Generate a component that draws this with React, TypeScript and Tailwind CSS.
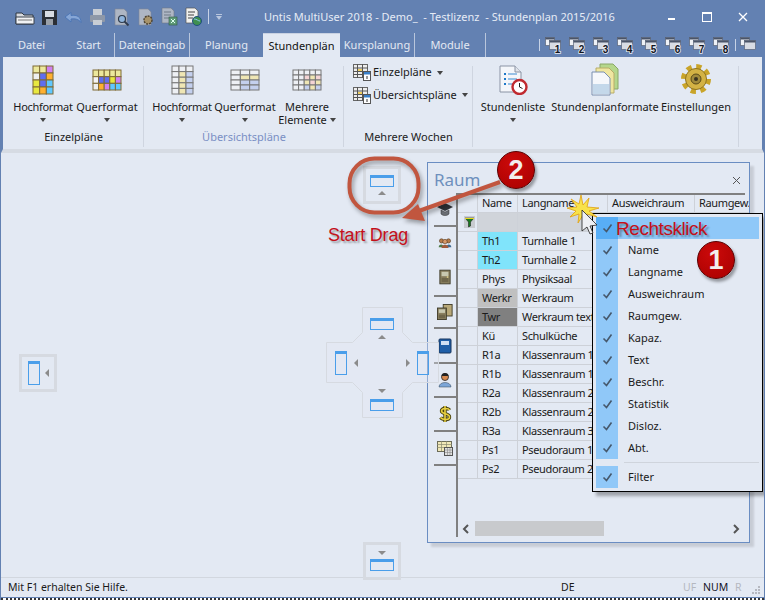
import type { ReactNode } from "react";

const TABS = [
  { label: "Datei", w: "w-[57px]" },
  { label: "Start", w: "w-[54px] pl-[3px]" },
  { label: "Dateneingab", w: "w-[76px] border-x border-[#b9c6dc]" },
  { label: "Planung", w: "w-[73px]" },
  { label: "Stundenplän", w: "w-[77px]", active: true },
  { label: "Kursplanung", w: "w-[75px] border-r border-[#b9c6dc]" },
  { label: "Module", w: "w-[71px] border-r border-[#b9c6dc]" },
];

const ROWS = [
  ["Th1", "Turnhalle 1", "bg-[#80e4fb]"],
  ["Th2", "Turnhalle 2", "bg-[#80e4fb]"],
  ["Phys", "Physiksaal", ""],
  ["Werkr", "Werkraum", "bg-[#c0c0c0]"],
  ["Twr", "Werkraum text", "bg-[#808080]"],
  ["Kü", "Schulküche", ""],
  ["R1a", "Klassenraum 1a", ""],
  ["R1b", "Klassenraum 1b", ""],
  ["R2a", "Klassenraum 2a", ""],
  ["R2b", "Klassenraum 2b", ""],
  ["R3a", "Klassenraum 3a", ""],
  ["Ps1", "Pseudoraum 1", ""],
  ["Ps2", "Pseudoraum 2", ""],
];

const MENU = ["Name", "Langname", "Ausweichraum", "Raumgew.", "Kapaz.", "Text", "Beschr.", "Statistik", "Disloz.", "Abt."];

function Caret({ className = "" }: { className?: string }) {
  return <span className={`inline-block h-0 w-0 border-x-[3.5px] border-t-[4px] border-x-transparent border-t-[#444] ${className}`} />;
}

// small coloured timetable icon used on the big ribbon buttons
function GridIcon({ cols, rows, w, h, colors, line, bg = "#f4f4f4" }: { cols: number; rows: number; w: number; h: number; colors: Record<string, string>; line: string; bg?: string }) {
  const cw = w / cols;
  const ch = h / rows;
  const cells = [];
  for (let r = 0; r < rows; r++) {
    for (let c = 0; c < cols; c++) {
      cells.push(<rect key={`${r}-${c}`} x={c * cw + 1} y={r * ch + 1} width={cw} height={ch} fill={colors[`${r}${c}`] ?? bg} stroke={line} strokeWidth="1" />);
    }
  }
  return (
    <svg width={w + 2} height={h + 2} viewBox={`0 0 ${w + 2} ${h + 2}`}>
      {cells}
    </svg>
  );
}

function BigButton({ w, icon, lines, caret, caretInline, tight }: { w: string; icon: ReactNode; lines: string[]; caret?: boolean; caretInline?: boolean; tight?: boolean }) {
  return (
    <div className={`flex shrink-0 flex-col items-center ${w}`}>
      <div className="flex h-[33px] items-center justify-center">{icon}</div>
      <div className={`mt-[4px] flex flex-col items-center leading-[13px] ${tight ? "tracking-[-0.3px]" : ""}`}>
        {lines.map((l, i) => (
          <span key={l} className="flex items-center gap-[3px] whitespace-nowrap">
            {l}
            {caretInline && i === lines.length - 1 && <Caret />}
          </span>
        ))}
        {caret && <Caret className="mt-[5px]" />}
      </div>
    </div>
  );
}

function RibbonGroup({ w, label, labelClass, pad, children }: { w: string; label: string; labelClass?: string; pad: string; children: ReactNode }) {
  return (
    <div className={`relative flex shrink-0 flex-col ${w}`}>
      <div className={`flex flex-1 ${pad}`}>{children}</div>
      <div className={`h-[20px] text-center leading-[16px] ${labelClass ?? "text-[#222]"}`}>{label}</div>
      <div className="absolute right-0 top-[3px] bottom-[2px] w-px bg-[#cfd5e0]" />
    </div>
  );
}

function SmallTable() {
  return (
    <svg width="18" height="17" viewBox="0 0 18 17">
      <rect x="0.5" y="0.5" width="14" height="13" fill="#eee" stroke="#666" />
      <path d="M0 4h15M0 7.500h15M0 10.500h15M4.500 0v14M9.500 0v14" stroke="#555" />
      <rect x="5" y="5" width="4" height="2" fill="#f0d060" />
      <rect x="10" y="8" width="4" height="2" fill="#e08080" />
      <rect x="10.500" y="7.500" width="7" height="9" fill="#fff" stroke="#555" />
      <rect x="11" y="8" width="6" height="2.500" fill="#3a80c8" />
      <path d="M14 12v3" stroke="#333" />
    </svg>
  );
}

function WinIcon({ n }: { n?: number }) {
  return (
    <svg width="20" height="18" viewBox="0 0 20 18">
      <rect x="0.500" y="1.500" width="9" height="8" fill="#eef1f6" stroke="#5a6478" strokeWidth="0.7" />
      <rect x="0.500" y="1.500" width="9" height="2" fill="#4a5468" />
      <rect x="4.500" y="4.500" width="11" height="9" fill="#d8dce4" stroke="#5a6478" strokeWidth="0.7" />
      <rect x="4.500" y="4.500" width="11" height="2" fill="#4a5468" />
      {n ? (
        <text x="12.500" y="16.500" fontSize="10" fontWeight="700" fill="#10141c" stroke="#e8ecf4" strokeWidth="1.600" paintOrder="stroke" fontFamily="Liberation Sans, sans-serif" textAnchor="middle">
          {n}
        </text>
      ) : null}
    </svg>
  );
}

function QuickIcons() {
  return (
    <div className="flex items-center">
      <svg width="24" height="20" viewBox="0 0 24 20" className="ml-[10px]">
        <path d="M3 6h6l2 2h9v9H3z" fill="#d6d9de" stroke="#2f3640" />
        <path d="M3 10h18v7H3z" fill="#f1f2f4" stroke="#39414d" />
        <path d="M5 13h14" stroke="#777" />
      </svg>
      <svg width="24" height="20" viewBox="0 0 24 20">
        <rect x="5" y="3" width="15" height="15" fill="#2b2f36" />
        <rect x="8" y="4" width="9" height="6" fill="#d8dce2" />
        <rect x="9" y="12" width="7" height="6" fill="#9aa0a8" />
      </svg>
      <svg width="24" height="20" viewBox="0 0 24 20">
        <path d="M4 10l6-4.500v3c6-1 10 1.500 10 7-2.500-3.500-6-4-10-3.500v3z" fill="#86a6d6" stroke="#4a74b4" strokeWidth="0.9" />
      </svg>
      <svg width="24" height="20" viewBox="0 0 24 20">
        <rect x="8" y="2" width="9" height="6" fill="#c8cdd4" />
        <rect x="5" y="8" width="15" height="7" rx="1" fill="#8e98a8" />
        <rect x="8" y="13" width="9" height="5" fill="#c8cdd4" />
      </svg>
      <svg width="24" height="20" viewBox="0 0 24 20">
        <path d="M6 2h9l3 3v13H6z" fill="#aeb6c4" stroke="#7f8896" strokeWidth="0.6" />
        <circle cx="13" cy="12" r="3.500" fill="#8fb4dc" stroke="#2e3a4c" strokeWidth="1.200" />
        <path d="M15.500 14.500l4 4" stroke="#2e3a4c" strokeWidth="1.800" />
      </svg>
      <svg width="24" height="20" viewBox="0 0 24 20">
        <path d="M6 2h9l3 3v13H6z" fill="#aeb6c4" stroke="#7f8896" strokeWidth="0.6" />
        <circle cx="15" cy="13" r="4" fill="#a8936a" stroke="#4a4030" strokeWidth="1.400" strokeDasharray="2 1" />
      </svg>
      <svg width="24" height="20" viewBox="0 0 24 20">
        <path d="M5 1h9l3 3v12H5z" fill="#aeb6c4" stroke="#6f7886" strokeWidth="0.6" />
        <path d="M7 5h7M7 8h7M7 11h7" stroke="#6f7886" />
        <rect x="12" y="10" width="8" height="8" fill="#5f9a78" stroke="#2f5a42" strokeWidth="0.6" />
        <path d="M14 12l4 4M18 12l-4 4" stroke="#dfe" />
      </svg>
      <svg width="24" height="20" viewBox="0 0 24 20">
        <path d="M5 1h9l3 3v12H5z" fill="#f0f0ee" stroke="#555" strokeWidth="0.7" />
        <path d="M7 5h7M7 8h6M7 11h5" stroke="#444" />
        <circle cx="16" cy="14" r="4.500" fill="#3f8f50" stroke="#1f4f80" />
        <path d="M13 12c3 0 4 2 6 2" stroke="#8fd0f0" />
      </svg>
      <div className="ml-[3px] h-[15px] w-px bg-[#c6d2e6]" />
      <div className="ml-[7px] mt-px flex flex-col items-center gap-[1px]">
        <div className="h-px w-[6px] bg-[#b8c6de]" />
        <Caret className="border-t-[#b8c6de]" />
      </div>
    </div>
  );
}

function PanelGlyph({ vertical }: { vertical?: boolean }) {
  return <div className={`border border-[#4a9eea] border-t-[3px] bg-transparent ${vertical ? "h-[24px] w-[12px]" : "h-[12px] w-[24px]"}`} />;
}

function GuideArrow({ dir }: { dir: "up" | "down" | "left" }) {
  if (dir === "up") return <span className="h-0 w-0 border-x-[4px] border-b-[4px] border-x-transparent border-b-[#8b8b8b]" />;
  if (dir === "down") return <span className="h-0 w-0 border-x-[4px] border-t-[4px] border-x-transparent border-t-[#8b8b8b]" />;
  return <span className="h-0 w-0 border-y-[4px] border-r-[4px] border-y-transparent border-r-[#8b8b8b]" />;
}

function SideIcon({ kind }: { kind: string }) {
  if (kind === "cap")
    return (
      <svg width="18" height="16" viewBox="0 0 18 16">
        <path d="M1 6l8-4 8 4-8 4z" fill="#30343a" />
        <path d="M5 9v4c2 2 6 2 8 0V9l-4 2z" fill="#6a6e74" stroke="#333" strokeWidth="0.5" />
      </svg>
    );
  if (kind === "people")
    return (
      <svg width="14" height="12" viewBox="0 0 20 16">
        <circle cx="5" cy="5" r="3" fill="#b87c48" stroke="#4a3018" strokeWidth="0.8" />
        <circle cx="15" cy="5" r="3" fill="#b87c48" stroke="#4a3018" strokeWidth="0.8" />
        <circle cx="10" cy="6" r="3.200" fill="#d89868" stroke="#4a3018" strokeWidth="0.8" />
        <path d="M1 14c0-5 7-5 7 0z" fill="#4f7a48" />
        <path d="M12 14c0-5 7-5 7 0z" fill="#3e6a90" />
        <path d="M5 15c0-6 10-6 10 0z" fill="#a05a3a" />
      </svg>
    );
  if (kind === "door")
    return (
      <svg width="12" height="16" viewBox="0 0 14 18">
        <rect x="1" y="1" width="12" height="16" fill="#8a8060" stroke="#3c3826" />
        <rect x="3" y="3" width="8" height="5" fill="#c8c8b0" />
        <rect x="3" y="10" width="8" height="5" fill="#6f664a" />
        <circle cx="10" cy="9" r="1" fill="#e8d890" />
      </svg>
    );
  if (kind === "doors")
    return (
      <svg width="16" height="16" viewBox="0 0 18 18">
        <rect x="7" y="0.500" width="10" height="13" fill="#b8a878" stroke="#3c3826" />
        <rect x="0.500" y="4.500" width="10" height="13" fill="#8a8060" stroke="#3c3826" />
        <rect x="2" y="6" width="7" height="4" fill="#c8c8b0" />
        <rect x="2" y="12" width="7" height="4" fill="#6f664a" />
      </svg>
    );
  if (kind === "book")
    return (
      <svg width="14" height="16" viewBox="0 0 14 16">
        <rect x="1" y="1" width="12" height="14" rx="1" fill="#1f5fa8" stroke="#17345c" />
        <rect x="3" y="3" width="8" height="4" fill="#cfe0f4" />
      </svg>
    );
  if (kind === "person")
    return (
      <svg width="14" height="16" viewBox="0 0 14 16">
        <circle cx="7" cy="5" r="3.500" fill="#d88a50" stroke="#222" strokeWidth="0.8" />
        <path d="M3.500 4c0-4 7-4 7 0z" fill="#222" />
        <path d="M1 15c0-6 12-6 12 0z" fill="#7ca6d8" stroke="#345" strokeWidth="0.5" />
      </svg>
    );
  if (kind === "dollar")
    return (
      <svg width="14" height="18" viewBox="0 0 14 18">
        <path d="M11.500 5c-1-2-8-2.500-8 1 0 3.500 8 2 8 6 0 3.500-7 3-9 .5M7 1v16" fill="none" stroke="#4a4410" strokeWidth="3.400" />
        <path d="M11.500 5c-1-2-8-2.500-8 1 0 3.500 8 2 8 6 0 3.500-7 3-9 .5M7 1v16" fill="none" stroke="#e8d040" strokeWidth="1.600" />
      </svg>
    );
  return (
    <svg width="16" height="16" viewBox="0 0 16 16">
      <rect x="0.500" y="1.500" width="14" height="10" fill="#f0e8b8" stroke="#6c6c58" />
      <path d="M0 4.500h15M0 7.500h15M4.500 1v10M9.500 1v10" stroke="#8a8a70" strokeWidth="0.7" />
      <rect x="7.500" y="7.500" width="8" height="8" fill="#e0e0e0" stroke="#555" />
      <path d="M8 10h7M8 12.500h7M10.500 8v7M13 8v7" stroke="#888" strokeWidth="0.6" />
    </svg>
  );
}

const SIDE_TABS = [
  { h: "h-[34px]", icons: ["cap"] },
  { h: "h-[70px]", icons: ["people", "door"] },
  { h: "h-[32px]", icons: ["doors"] },
  { h: "h-[35px]", icons: ["book"] },
  { h: "h-[34px]", icons: ["person"] },
  { h: "h-[34px]", icons: ["dollar"] },
  { h: "h-[34px]", icons: ["cal"] },
];

function Cell({ w, className = "", children }: { w: string; className?: string; children?: ReactNode }) {
  return <div className={`flex shrink-0 items-center overflow-hidden whitespace-nowrap border-r border-b border-[#cdd1d8] pl-[4px] tracking-[-0.35px] ${w} ${className}`}>{children}</div>;
}

function Check() {
  return (
    <svg width="11" height="10" viewBox="0 0 11 10">
      <path d="M1.500 5.500l3 3 5-7" fill="none" stroke="#46586c" strokeWidth="1.600" />
    </svg>
  );
}

export default function App() {
  const gold = { "00": "#ece89c", "01": "#ece89c", "02": "#ece89c" };
  return (
    <div className="relative flex h-[600px] w-[765px] flex-col overflow-hidden border-x border-[#6381b2] bg-[#e3e9f3] text-[11px] text-[#1a1a1a] [font-family:'Noto_Sans',sans-serif]">
      {/* title bar */}
      <div className="flex h-[33px] shrink-0 items-center bg-[#6381b2] pl-[2px] text-[#e6ecf6]">
        <div className="w-[261px]">
          <QuickIcons />
        </div>
        <div className="whitespace-nowrap pt-[1px]">Untis MultiUser 2018 - Demo_ &nbsp;- Testlizenz &nbsp;- Stundenplan 2015/2016</div>
        <div className="ml-auto flex items-center">
          <div className="flex w-[36px] justify-center">
            <div className="mt-[5px] h-[2px] w-[7px] bg-white" />
          </div>
          <div className="flex w-[36px] justify-center">
            <div className="h-[10px] w-[10px] border border-white border-t-2" />
          </div>
          <div className="flex w-[36px] justify-center text-white">
            <svg width="10" height="10" viewBox="0 0 10 10">
              <path d="M1 1l8 8M9 1l-8 8" stroke="#fff" strokeWidth="1.300" />
            </svg>
          </div>
          <div className="w-[3px]" />
        </div>
      </div>

      {/* tabs */}
      <div className="flex h-[24px] shrink-0 bg-[#6381b2] pl-[2px] text-[#e3e9f3]">
        {TABS.map((t) => (
          <div key={t.label} className={`flex items-center justify-center whitespace-nowrap pt-[1px] ${t.w} ${t.active ? "border-t border-[#c9d2e2] bg-[#e3e9f3] text-[#111]" : ""}`}>
            {t.label}
          </div>
        ))}
        <div className="ml-[53px] flex items-center">
          <div className="mr-[3px] h-[12px] w-px bg-[#c6d2e6]" />
          <div className="flex w-[192px]">
            {[1, 2, 3, 4, 5, 6, 7, 8].map((n) => (
              <div key={n} className="flex w-[24px] justify-center">
                <WinIcon n={n} />
              </div>
            ))}
          </div>
          <div className="h-[12px] w-px bg-[#c6d2e6]" />
          <div className="ml-[4px]">
            <WinIcon />
          </div>
        </div>
      </div>

      {/* ribbon */}
      <div className="flex h-[96px] shrink-0 border-x-2 border-b-[4px] border-x-[#6381b2] border-b-[#d6dbe3] pt-[6px]">
        <RibbonGroup w="w-[141px]" label="Einzelpläne" pad="pl-[8px]">
          <BigButton
            w="w-[64px]"
            caret
            tight
            lines={["Hochformat"]}
            icon={
              <GridIcon cols={3} rows={4} w={20} h={28} line="#7f6b35" colors={{ "00": "#ece89c", "01": "#ece89c", "02": "#d080f0", "10": "#efefef", "11": "#5f6ef0", "12": "#ffb030", "20": "#e8e840", "21": "#5f6ef0", "22": "#60c8ff", "30": "#e8e840", "31": "#ffb030", "32": "#60c8ff" }} />
            }
          />
          <BigButton
            w="w-[64px]"
            caret
            lines={["Querformat"]}
            icon={
              <GridIcon cols={5} rows={3} w={28} h={20} line="#7f6b35" colors={{ ...gold, "03": "#ece89c", "04": "#ece89c", "11": "#5f6ef0", "12": "#5f6ef0", "13": "#e8e840", "14": "#d080f0", "20": "#efefef", "21": "#ffb030", "22": "#d080f0", "23": "#60c8ff", "24": "#60c8ff" }} />
            }
          />
        </RibbonGroup>
        <RibbonGroup w="w-[200px]" label="Übersichtspläne" labelClass="text-[#7a8fc4]" pad="pl-[6px]">
          <BigButton
            w="w-[64px]"
            caret
            tight
            lines={["Hochformat"]}
            icon={<GridIcon cols={3} rows={5} w={21} h={28} line="#777" bg="#eef0f4" colors={{ "11": "#efe6b4", "12": "#c4d0ee", "21": "#efe6b4", "22": "#c4d0ee", "31": "#efe6b4", "32": "#c4d0ee", "41": "#efe6b4", "42": "#c4d0ee" }} />}
          />
          <BigButton
            w="w-[62px]"
            caret
            lines={["Querformat"]}
            icon={<GridIcon cols={3} rows={4} w={28} h={20} line="#777" bg="#eef0f4" colors={{ "11": "#efe6b4", "12": "#efe6b4", "21": "#c4d0ee", "22": "#c4d0ee", "31": "#c4d0ee", "32": "#c4d0ee" }} />}
          />
          <BigButton
            w="w-[62px]"
            caretInline
            lines={["Mehrere", "Elemente"]}
            icon={<GridIcon cols={5} rows={4} w={28} h={20} line="#777" bg="#eef0f4" colors={{ "12": "#f4d4d4", "13": "#efe6b4", "14": "#f4d4d4", "22": "#efe6b4", "23": "#f4d4d4", "24": "#efe6b4", "32": "#c4d0ee", "33": "#efe6b4", "34": "#c4d0ee" }} />}
          />
        </RibbonGroup>
        <RibbonGroup w="w-[129px]" label="Mehrere Wochen" pad="pl-[9px]">
          <div className="-mt-[2px] flex flex-col">
            <div className="flex h-[23px] items-center gap-[2px]">
              <SmallTable />
              <span>Einzelpläne</span>
              <Caret className="ml-[3px]" />
            </div>
            <div className="flex h-[22px] items-center gap-[2px]">
              <SmallTable />
              <span>Übersichtspläne</span>
              <Caret className="ml-[3px]" />
            </div>
          </div>
        </RibbonGroup>
        <RibbonGroup w="w-[266px]" label="" pad="pl-[7px]">
          <BigButton
            w="w-[66px]"
            caret
            lines={["Stundenliste"]}
            icon={
              <svg width="30" height="30" viewBox="0 0 30 30">
                <path d="M2 1h15l6 6v20H2z" fill="#f4f6fa" stroke="#8a93a4" />
                <path d="M17 1v6h6" fill="#dfe3ea" stroke="#8a93a4" />
                <path d="M6 9h2M6 14h2M6 19h2" stroke="#1e78c8" strokeWidth="2" />
                <path d="M10 9h9M10 14h9M10 19h6" stroke="#3a8ad0" />
                <circle cx="21.500" cy="22" r="7" fill="#fff" stroke="#c02a30" strokeWidth="2.400" />
                <path d="M21.500 18v4l3 1.500" fill="none" stroke="#222" />
              </svg>
            }
          />
          <BigButton
            w="w-[118px]"
            lines={["Stundenplanformate"]}
            icon={
              <svg width="28" height="33" viewBox="0 0 28 33">
                <path d="M9 1h13l5 5v20H9z" fill="#b5d78c" stroke="#8aa868" />
                <path d="M5 5h13l5 5v20H5z" fill="#efe6a0" stroke="#b8ac68" />
                <path d="M1 9h12l6 6v17H1z" fill="#f5f7fb" stroke="#7a90b0" />
                <path d="M2 21h16v10H2z" fill="#c4d8ea" />
              </svg>
            }
          />
          <BigButton
            w="w-[64px]"
            lines={["Einstellungen"]}
            icon={
              <svg width="32" height="32" viewBox="0 0 32 32">
                <circle cx="16" cy="15" r="12" fill="none" stroke="#c9a429" strokeWidth="6" strokeDasharray="5 4.400" />
                <circle cx="16" cy="15" r="10.500" fill="#d3b244" stroke="#8f7420" />
                <circle cx="16" cy="15" r="5" fill="#a08a3c" stroke="#5a4a18" />
                <circle cx="16" cy="15" r="2" fill="#3a3420" />
              </svg>
            }
          />
        </RibbonGroup>
      </div>

      <div className="flex-1" />

      {/* status bar */}
      <div className="relative flex h-[20px] shrink-0 items-center border-t border-[#d2d7df] pl-[7px] text-[10.500px]">
        <span className="w-[553px]">Mit F1 erhalten Sie Hilfe.</span>
        <span className="w-[122px]">DE</span>
        <span className="w-[20px] text-[#b5b8c0]">UF</span>
        <span className="w-[32px] text-[#141428]">NUM</span>
        <span className="text-[#b5b8c0]">R</span>
        <svg width="10" height="10" viewBox="0 0 10 10" className="absolute bottom-[2px] right-[3px]">
          <path d="M7 1h2v2H7zM4 4h2v2H4zM7 4h2v2H7zM1 7h2v2H1zM4 7h2v2H4zM7 7h2v2H7z" fill="#b5b8c0" />
        </svg>
      </div>
      <div className="h-px shrink-0 bg-[#6381b2]" />
      <div className="h-[2px] shrink-0 border-t-2 border-dotted border-[#333] bg-white" />

      {/* dock guides, left and bottom and top */}
      <div className="absolute left-[18px] top-[354px] flex h-[38px] w-[38px] items-center justify-center gap-[5px] border-[3px] border-[#d6dae1]">
        <PanelGlyph vertical />
        <GuideArrow dir="left" />
      </div>
      <div className="absolute left-[362px] top-[542px] flex h-[38px] w-[38px] flex-col items-center justify-center gap-[4px] border-[3px] border-[#d6dae1]">
        <GuideArrow dir="down" />
        <PanelGlyph />
      </div>
      <div className="absolute left-[362px] top-[166px] flex h-[38px] w-[38px] flex-col items-center justify-center gap-[4px] border-[3px] border-[#d6dae1]">
        <PanelGlyph />
        <GuideArrow dir="up" />
      </div>

      {/* floating room window */}
      <div className="absolute left-[426px] top-[162px] flex h-[381px] w-[323px] flex-col border border-[#6a8dc2] bg-[#e3e9f3] shadow-[4px_4px_2px_rgba(0,0,0,0.12)]">
        <div className="flex h-[30px] shrink-0 items-center justify-between pl-[6px] pr-[8px] pt-[4px]">
          <span className="text-[17px] text-[#6e90bd]">Raum</span>
          <svg width="9" height="9" viewBox="0 0 9 9">
            <path d="M1 1l7 7M8 1l-7 7" stroke="#555" />
          </svg>
        </div>
        <div className="flex min-h-0 flex-1">
          <div className="flex h-[344px] w-[30px] shrink-0 flex-col border-r-2 border-[#808080] pl-[6px]">
            {SIDE_TABS.map((t) => (
              <div key={t.icons[0]} className={`flex shrink-0 flex-col items-center justify-around border-b-2 border-[#808080] pr-[1px] ${t.h}`}>
                {t.icons.map((k) => (
                  <SideIcon key={k} kind={k} />
                ))}
              </div>
            ))}
          </div>
          <div className="flex min-w-0 flex-1 flex-col overflow-hidden pr-[4px]">
            <div className="border-t-2 border-[#808080]">
              <div className="flex h-[18px]">
                <Cell w="w-[20px]" />
                <Cell w="w-[40px]">Name</Cell>
                <Cell w="w-[90px]">Langname</Cell>
                <Cell w="w-[87px]">Ausweichraum</Cell>
                <Cell w="w-[60px]">Raumgew.</Cell>
              </div>
              <div className="flex h-[19px]">
                <Cell w="w-[20px]" className="justify-center pl-0">
                  <svg width="11" height="12" viewBox="0 0 11 12">
                    <rect width="11" height="12" fill="#c8cbd0" />
                    <path d="M1 2h9L6.500 6v4l-2 1V6z" fill="#1a7a20" stroke="#111" strokeWidth="0.500" />
                    <path d="M1 2h9v1H1z" fill="#e8d820" />
                  </svg>
                </Cell>
                <Cell w="w-[40px]" className="bg-[#d0d4da]" />
                <Cell w="w-[90px]" className="bg-[#d0d4da]" />
                <Cell w="w-[87px]" className="bg-[#d0d4da]" />
                <Cell w="w-[60px]" className="bg-[#d0d4da]" />
              </div>
              {ROWS.map((r) => (
                <div key={r[0]} className="flex h-[19px]">
                  <Cell w="w-[20px]" />
                  <Cell w="w-[40px]" className={r[2]}>
                    {r[0]}
                  </Cell>
                  <Cell w="w-[90px]">{r[1]}</Cell>
                  <Cell w="w-[87px]" />
                  <Cell w="w-[60px]" />
                </div>
              ))}
            </div>
            <div className="mt-[42px] flex h-[15px] items-center">
              <svg width="17" height="10" viewBox="0 0 17 10" className="shrink-0">
                <path d="M10 1L6 5l4 4" fill="none" stroke="#555" strokeWidth="2" />
              </svg>
              <div className="h-[15px] w-[129px] bg-[#c8cacd]" />
              <svg width="10" height="10" viewBox="0 0 10 10" className="ml-auto mr-[4px] shrink-0">
                <path d="M3 1l4 4-4 4" fill="none" stroke="#555" strokeWidth="2" />
              </svg>
            </div>
          </div>
        </div>
      </div>

      {/* centre dock cross */}
      <svg width="116" height="116" viewBox="0 0 116 116" className="absolute left-[324px] top-[305px]">
        <path d="M37.500 2.500h40v25l10 10h26v40h-26l-10 10v25h-40v-25l-10-10h-26v-40h26l10-10z" fill="#e3e9f3" fillOpacity="0.35" stroke="#d6dae1" />
        <g fill="none" stroke="#4a9eea">
          <rect x="45.500" y="13.500" width="23" height="11" />
          <rect x="45.500" y="94.500" width="23" height="11" />
          <rect x="10.500" y="46.500" width="11" height="23" />
          <rect x="92.500" y="46.500" width="11" height="23" />
        </g>
        <g fill="#4a9eea">
          <rect x="45" y="13" width="24" height="3" />
          <rect x="45" y="94" width="24" height="3" />
          <rect x="10" y="46" width="12" height="3" />
          <rect x="92" y="46" width="12" height="3" />
        </g>
        <g fill="#8b8b8b">
          <path d="M53 34l4-4 4 4z" />
          <path d="M53 84l4 4 4-4z" />
          <path d="M33 54l-4 4 4 4z" />
          <path d="M81 54l4 4-4 4z" />
        </g>
      </svg>

      {/* context menu */}
      <div className="absolute left-[591px] top-[213px] h-[279px] w-[171px] border border-black bg-[#e3e9f3] p-[3px] shadow-[4px_4px_3px_rgba(0,0,0,0.3)]">
        <div className="flex h-[22px] bg-[#8fc8f8]">
          <div className="flex w-[22px] items-center justify-center bg-[#58aef6]">
            <Check />
          </div>
        </div>
        {MENU.map((m) => (
          <div key={m} className="flex h-[22px]">
            <div className="flex w-[22px] items-center justify-center bg-[#90c8f8]">
              <Check />
            </div>
            <span className="ml-[10px] flex items-center">{m}</span>
          </div>
        ))}
        <div className="ml-[28px] mt-[3px] h-px bg-[#cfd4dc]" />
        <div className="mt-[3px] flex h-[22px]">
          <div className="flex w-[22px] items-center justify-center bg-[#90c8f8]">
            <Check />
          </div>
          <span className="ml-[10px] flex items-center">Filter</span>
        </div>
      </div>

      {/* tutorial annotations on top of the screenshot */}
      <span className="absolute left-[327px] top-[222px] text-[18px] leading-[27px] tracking-[-0.2px] text-[#c4101a] [font-family:'Liberation_Sans',sans-serif] [text-shadow:2px_2px_2px_rgba(0,0,0,0.35)]">Start Drag</span>
      <span className="absolute left-[615px] top-[216px] text-[19px] leading-[25px] tracking-[-0.45px] text-[#c4101a] [font-family:'Liberation_Sans',sans-serif] [text-shadow:2px_2px_2px_rgba(0,0,0,0.35)]">Rechtsklick</span>
      <svg width="300" height="120" viewBox="0 0 300 120" className="pointer-events-none absolute left-[339px] top-[150px] [filter:drop-shadow(2px_3px_2px_rgba(0,0,0,0.35))]">
        <rect x="9.500" y="8.500" width="69" height="54" rx="25" fill="none" stroke="#c1563f" strokeWidth="4" />
        <path d="M160 32L76 62" stroke="#c1563f" strokeWidth="4" />
        <path d="M62 68l16-14 7 17z" fill="#c1563f" />
      </svg>
      {/* number badges */}
      <div className="absolute left-[496px] top-[151px] flex h-[38px] w-[38px] items-center justify-center rounded-full border border-[#5a0000] bg-[radial-gradient(circle_at_40%_30%,#cc0a0a,#a80000)] text-[27px] font-bold text-[#f2eeee] shadow-[2px_3px_3px_rgba(0,0,0,0.35)] [font-family:'Liberation_Sans',sans-serif]">2</div>
      <div className="absolute left-[696px] top-[241px] flex h-[38px] w-[38px] items-center justify-center rounded-full border border-[#5a0000] bg-[radial-gradient(circle_at_40%_30%,#cc0a0a,#a80000)] text-[27px] font-bold text-[#f2eeee] shadow-[2px_3px_3px_rgba(0,0,0,0.35)] [font-family:'Liberation_Sans',sans-serif]">1</div>
      {/* click spark and cursor */}
      <svg width="40" height="44" viewBox="0 0 40 44" className="pointer-events-none absolute left-[563px] top-[195px]">
        <path d="M17 0l2 10 6-7-2 9 12 1-10 3 8 6-10-3 1 8-5-7-5 8 1-9-9 3 6-6-9-3 10-1-6-8 8 5z" fill="#f8e24a" stroke="#e0a010" strokeWidth="0.800" />
        <path d="M18 15v21l5-4 3 7 3-1-3-7 7-1z" fill="#eef0f4" stroke="#222" strokeWidth="0.800" />
      </svg>
    </div>
  );
}
